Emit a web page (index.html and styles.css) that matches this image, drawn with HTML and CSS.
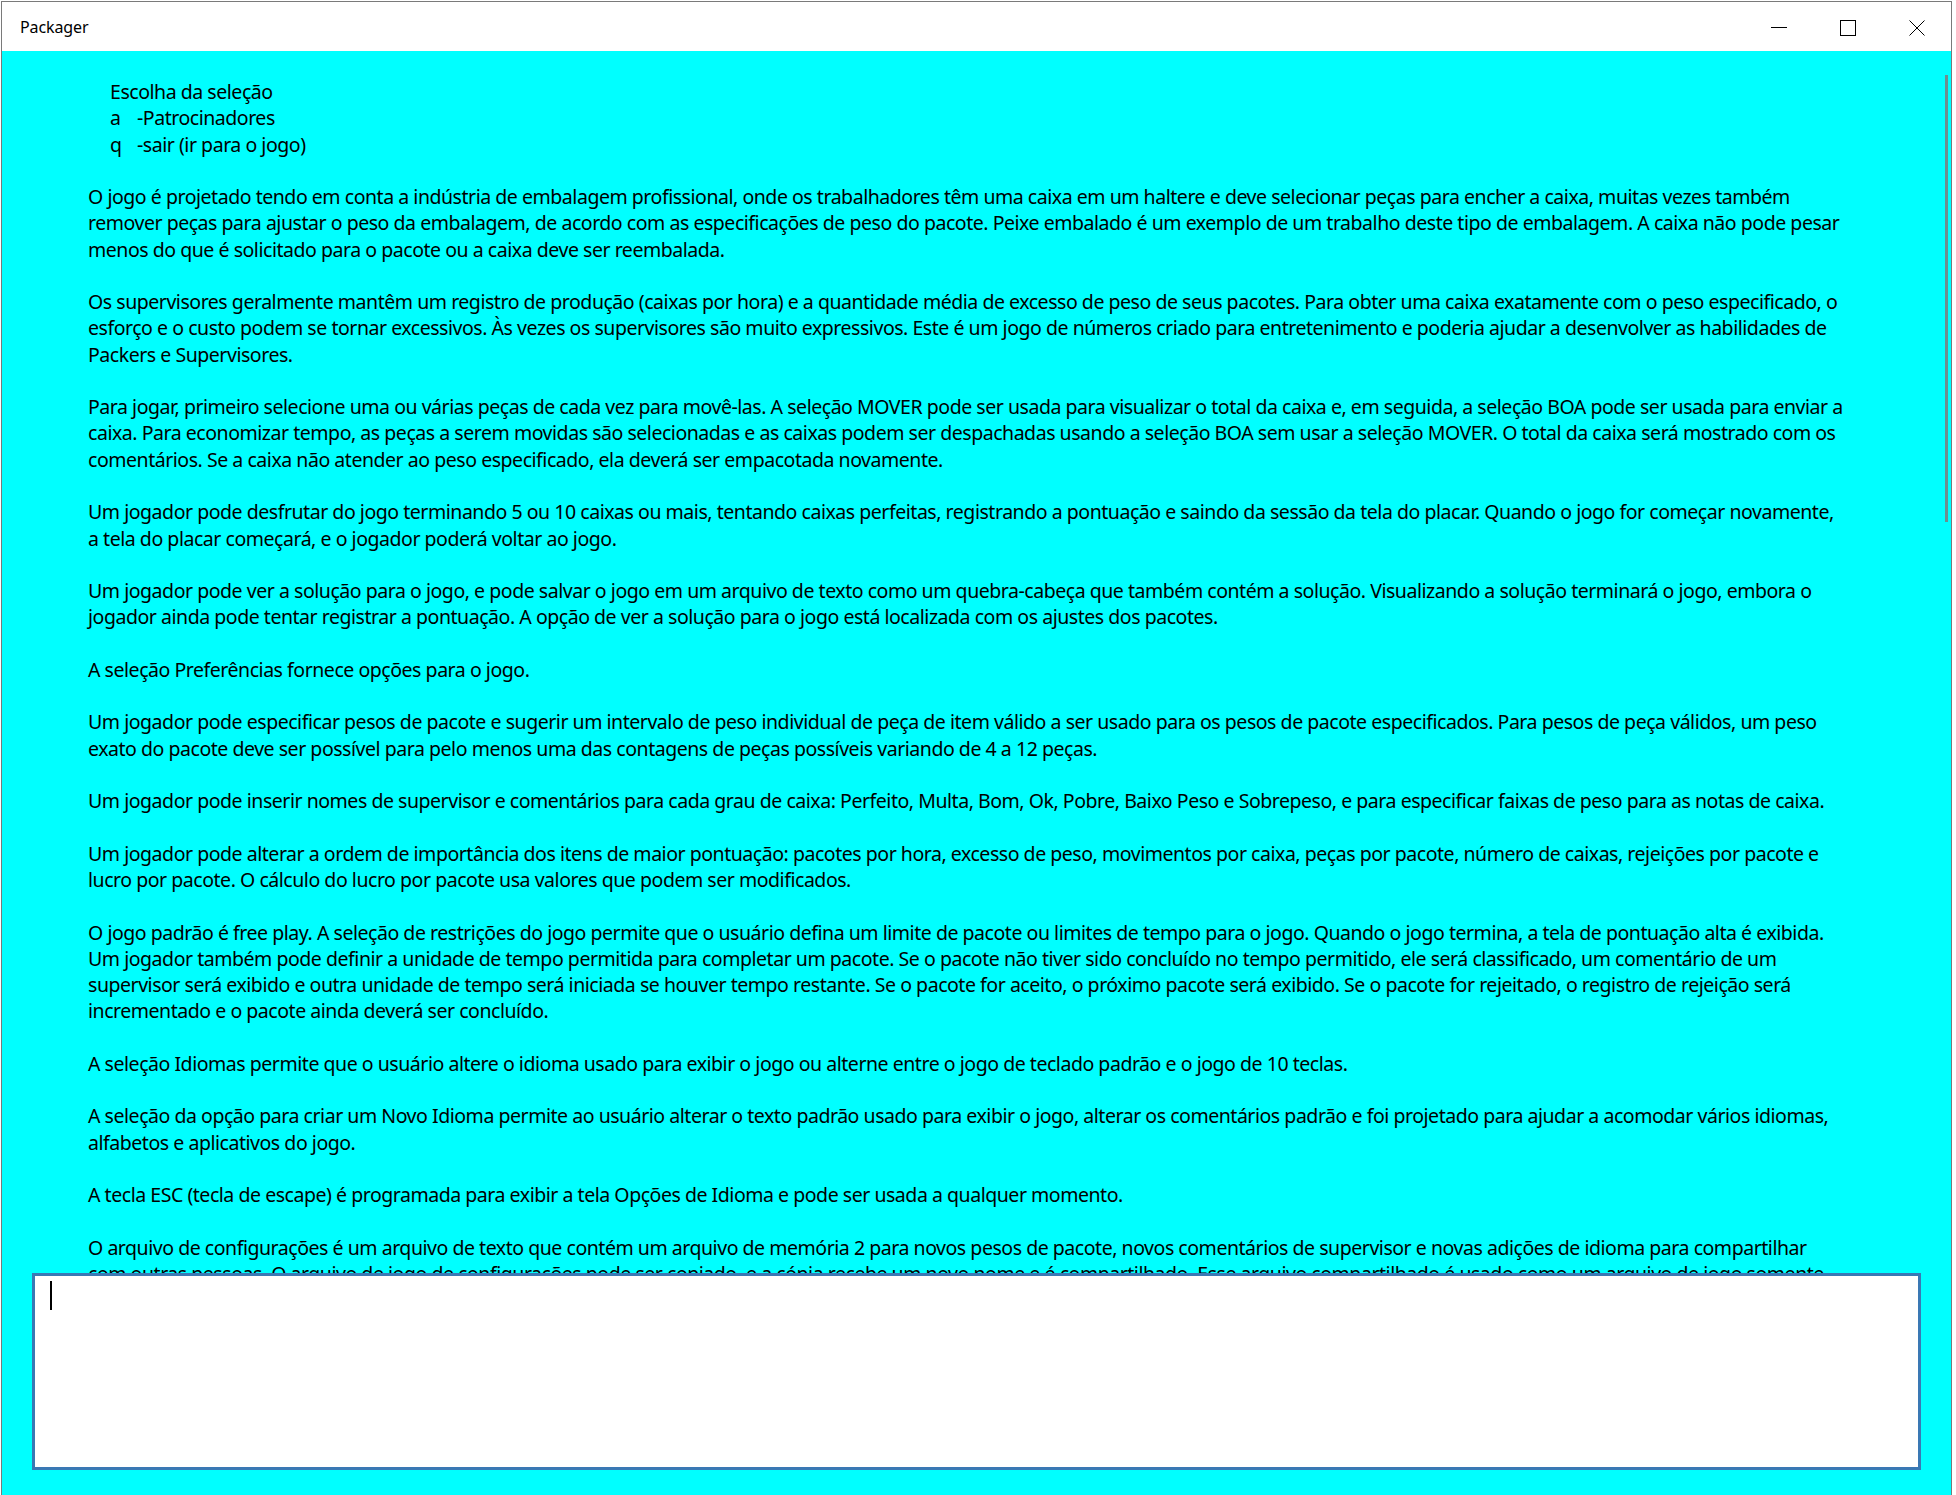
FILE: index.html
```html
<!DOCTYPE html>
<html lang="pt">
<head>
<meta charset="utf-8">
<title>Packager</title>
<link rel="stylesheet" href="styles.css">
</head>
<body>
<div class="window">
  <header class="titlebar">
    <span class="title">Packager</span>
    <div class="caption-buttons">
      <button class="cap-btn" aria-label="Minimizar"><svg width="16" height="16" viewBox="0 0 16 16"><path d="M0 7.5H16" stroke="#000" stroke-width="1" fill="none"/></svg></button>
      <button class="cap-btn" aria-label="Maximizar"><svg width="16" height="16" viewBox="0 0 16 16"><rect x="0.5" y="0.5" width="15" height="15" stroke="#000" stroke-width="1" fill="none"/></svg></button>
      <button class="cap-btn" aria-label="Fechar"><svg width="16" height="16" viewBox="0 0 16 16"><path d="M0.5 0.5L15.5 15.5M15.5 0.5L0.5 15.5" stroke="#000" stroke-width="1" fill="none"/></svg></button>
    </div>
  </header>
  <main class="client">
    <div class="viewer">
      <div class="content">
        <div class="menu">
          <div>Escolha da seleção</div>
          <div><span class="key">a</span>-Patrocinadores</div>
          <div><span class="key">q</span>-sair (ir para o jogo)</div>
        </div>
        <p>O jogo é projetado tendo em conta a indústria de embalagem profissional, onde os trabalhadores têm uma caixa em um haltere e deve selecionar peças para encher a caixa, muitas vezes também<br>remover peças para ajustar o peso da embalagem, de acordo com as especificações de peso do pacote. Peixe embalado é um exemplo de um trabalho deste tipo de embalagem. A caixa não pode pesar<br>menos do que é solicitado para o pacote ou a caixa deve ser reembalada.</p>
        <p>Os supervisores geralmente mantêm um registro de produção (caixas por hora) e a quantidade média de excesso de peso de seus pacotes. Para obter uma caixa exatamente com o peso especificado, o<br>esforço e o custo podem se tornar excessivos. Às vezes os supervisores são muito expressivos. Este é um jogo de números criado para entretenimento e poderia ajudar a desenvolver as habilidades de<br>Packers e Supervisores.</p>
        <p>Para jogar, primeiro selecione uma ou várias peças de cada vez para movê-las. A seleção MOVER pode ser usada para visualizar o total da caixa e, em seguida, a seleção BOA pode ser usada para enviar a<br>caixa. Para economizar tempo, as peças a serem movidas são selecionadas e as caixas podem ser despachadas usando a seleção BOA sem usar a seleção MOVER. O total da caixa será mostrado com os<br>comentários. Se a caixa não atender ao peso especificado, ela deverá ser empacotada novamente.</p>
        <p>Um jogador pode desfrutar do jogo terminando 5 ou 10 caixas ou mais, tentando caixas perfeitas, registrando a pontuação e saindo da sessão da tela do placar. Quando o jogo for começar novamente,<br>a tela do placar começará, e o jogador poderá voltar ao jogo.</p>
        <p>Um jogador pode ver a solução para o jogo, e pode salvar o jogo em um arquivo de texto como um quebra-cabeça que também contém a solução. Visualizando a solução terminará o jogo, embora o<br>jogador ainda pode tentar registrar a pontuação. A opção de ver a solução para o jogo está localizada com os ajustes dos pacotes.</p>
        <p>A seleção Preferências fornece opções para o jogo.</p>
        <p>Um jogador pode especificar pesos de pacote e sugerir um intervalo de peso individual de peça de item válido a ser usado para os pesos de pacote especificados. Para pesos de peça válidos, um peso<br>exato do pacote deve ser possível para pelo menos uma das contagens de peças possíveis variando de 4 a 12 peças.</p>
        <p>Um jogador pode inserir nomes de supervisor e comentários para cada grau de caixa: Perfeito, Multa, Bom, Ok, Pobre, Baixo Peso e Sobrepeso, e para especificar faixas de peso para as notas de caixa.</p>
        <p>Um jogador pode alterar a ordem de importância dos itens de maior pontuação: pacotes por hora, excesso de peso, movimentos por caixa, peças por pacote, número de caixas, rejeições por pacote e<br>lucro por pacote. O cálculo do lucro por pacote usa valores que podem ser modificados.</p>
        <p>O jogo padrão é free play. A seleção de restrições do jogo permite que o usuário defina um limite de pacote ou limites de tempo para o jogo. Quando o jogo termina, a tela de pontuação alta é exibida.<br>Um jogador também pode definir a unidade de tempo permitida para completar um pacote. Se o pacote não tiver sido concluído no tempo permitido, ele será classificado, um comentário de um<br>supervisor será exibido e outra unidade de tempo será iniciada se houver tempo restante. Se o pacote for aceito, o próximo pacote será exibido. Se o pacote for rejeitado, o registro de rejeição será<br>incrementado e o pacote ainda deverá ser concluído.</p>
        <p>A seleção Idiomas permite que o usuário altere o idioma usado para exibir o jogo ou alterne entre o jogo de teclado padrão e o jogo de 10 teclas.</p>
        <p>A seleção da opção para criar um Novo Idioma permite ao usuário alterar o texto padrão usado para exibir o jogo, alterar os comentários padrão e foi projetado para ajudar a acomodar vários idiomas,<br>alfabetos e aplicativos do jogo.</p>
        <p>A tecla ESC (tecla de escape) é programada para exibir a tela Opções de Idioma e pode ser usada a qualquer momento.</p>
        <p>O arquivo de configurações é um arquivo de texto que contém um arquivo de memória 2 para novos pesos de pacote, novos comentários de supervisor e novas adições de idioma para compartilhar<br>com outras pessoas. O arquivo de jogo de configurações pode ser copiado, e a cópia recebe um novo nome e é compartilhado. Esse arquivo compartilhado é usado como um arquivo de jogo somente</p>
      </div>
      <div class="scrollbar"></div>
    </div>
    <div class="input-box"><span class="caret"></span></div>
  </main>
</div>
</body>
</html>
```
FILE: styles.css
```css
html, body {
  margin: 0;
  padding: 0;
  background: #ffffff;
  overflow: hidden;
}

.window {
  box-sizing: border-box;
  margin: 1px 0 0 1px;
  width: 1951px;
  height: 1494px;
  border: 1px solid #7a7a7a;
  border-bottom: none;
  display: flex;
  flex-direction: column;
  font-family: "Noto Sans", "Open Sans", sans-serif;
  color: #000;
}

.titlebar {
  height: 49px;
  flex: none;
  background: #ffffff;
  display: flex;
  align-items: center;
}

.title {
  padding: 1px 0 0 18px;
  font-size: 16px;
  letter-spacing: -0.1px;
  flex: 1;
}

.caption-buttons {
  display: flex;
  height: 100%;
}

.cap-btn {
  width: 69px;
  height: 100%;
  border: none;
  background: transparent;
  padding: 0 0 0 1px;
  display: flex;
  align-items: center;
  justify-content: center;
}

.cap-btn svg {
  display: block;
  margin-top: 2px;
}

.client {
  flex: 1;
  background: #00ffff;
  display: flex;
  flex-direction: column;
  min-height: 0;
}

.viewer {
  position: relative;
  height: 1222px;
  flex: none;
  overflow: hidden;
}

.content {
  padding: 28px 0 0 86px;
  font-size: 19.5px;
  letter-spacing: -0.46px;
  line-height: 26.27px;
  white-space: nowrap;
}

.menu {
  padding-left: 22px;
  margin-bottom: 26.27px;
}

.key {
  display: inline-block;
  width: 27px;
}

.content p {
  margin: 0 0 26.27px 0;
}

.scrollbar {
  position: absolute;
  top: 24px;
  right: 3px;
  width: 3px;
  height: 447px;
  background: #6d8e8e;
}

.input-box {
  box-sizing: border-box;
  margin-left: 30px;
  width: 1889px;
  height: 197px;
  border: 3px solid #3a78b4;
  background: #ffffff;
  padding: 5px 0 0 15px;
}

.caret {
  display: block;
  width: 2px;
  height: 29px;
  background: #000;
}
```
